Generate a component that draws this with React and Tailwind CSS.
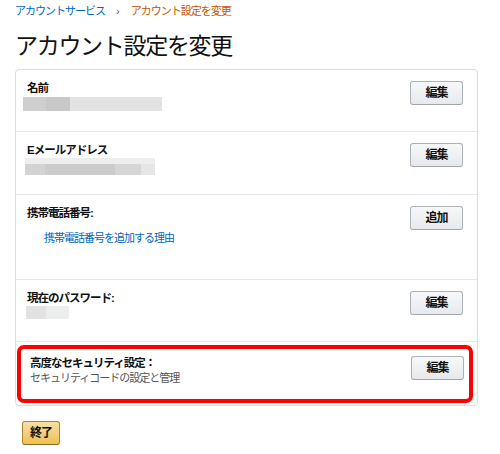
import React from 'react';

const font = { fontFamily: '"Liberation Sans", "Noto Sans CJK JP", sans-serif' };

function GreyButton({ children }) {
  return (
    <button className="w-[53px] h-[24px] shrink-0 rounded-[3px] border border-[#adb1b8] border-b-[#a2a6ac] bg-gradient-to-b from-[#f7f8fa] to-[#e7e9ec] text-[12px] tracking-[-1px] font-bold text-[#111] leading-none">
      {children}
    </button>
  );
}

function Row({ label, children, button, height, last }) {
  return (
    <div className={`flex justify-between px-[11px] pr-[14px] pt-[11px] ${last ? '' : 'border-b border-[#e7e7e7]'} ${height}`}>
      <div>
        <div className="text-[11.5px] tracking-[-1px] font-bold text-[#111] leading-[14px]">{label}</div>
        {children}
      </div>
      <GreyButton>{button}</GreyButton>
    </div>
  );
}

export default function App() {
  return (
    <div className="w-[500px] h-[454px] bg-white px-[15px] pt-[4px]" style={font}>
      <div className="flex items-center text-[11px] tracking-[-1px] leading-[14px]">
        <span className="text-[#0066c0]">アカウントサービス</span>
        <span className="text-[#555] ml-[11px] mr-[12px]">›</span>
        <span className="text-[#c45500]">アカウント設定を変更</span>
      </div>

      <h1 className="mt-[15px] text-[23px] tracking-[-1.3px] leading-[26px] text-[#111] font-normal">アカウント設定を変更</h1>

      <div className="mt-[10px] w-[463px] border border-[#ddd] rounded-[4px]">
        <Row label="名前" button="編集" height="h-[62px]">
          <div className="mt-[2px] -ml-[4px] flex h-[14px] w-[139px]">
            <div className="w-[23px] bg-[#cfcfcf]" />
            <div className="w-[24px] bg-[#c8c8c8]" />
            <div className="flex-1 bg-[#e3e3e3]" />
          </div>
        </Row>
        <Row label="Eメールアドレス" button="編集" height="h-[63px]">
          <div className="mt-[1px] -ml-[2px] w-[130px]">
            <div className="h-[6px] bg-[#eeeeee]" />
            <div className="flex h-[11px]">
              <div className="w-[20px] bg-[#d3d3d3]" />
              <div className="w-[70px] bg-[#cccccc]" />
              <div className="w-[26px] bg-[#d6d6d6]" />
              <div className="flex-1 bg-[#e6e6e6]" />
            </div>
          </div>
        </Row>
        <Row label="携帯電話番号:" button="追加" height="h-[85px]">
          <div className="mt-[11px] ml-[17px] text-[11px] tracking-[-1px] leading-[14px] text-[#0066c0]">携帯電話番号を追加する理由</div>
        </Row>
        <Row label="現在のパスワード:" button="編集" height="h-[62px]">
          <div className="mt-[1px] -ml-[1px] flex h-[13px] w-[43px]">
            <div className="w-[20px] bg-[#e2e2e2]" />
            <div className="flex-1 bg-[#eceeee]" />
          </div>
        </Row>
        <div className="h-[63px] pt-[3px] pl-[1px] pr-[4px] pb-[2px]">
          <div className="h-full flex justify-between border-[4px] border-[#ff0000] rounded-[7px] pl-[9px] pr-[5px] pt-[7px]">
            <div>
              <div className="text-[11.5px] tracking-[-1px] font-bold text-[#111] leading-[14px]">高度なセキュリティ設定：</div>
              <div className="mt-[1px] text-[11px] tracking-[-1px] leading-[14px] text-[#555]">セキュリティコードの設定と管理</div>
            </div>
            <GreyButton>編集</GreyButton>
          </div>
        </div>
      </div>

      <button className="mt-[15px] ml-[7px] w-[38px] h-[24px] rounded-[3px] border border-[#a88734] border-b-[#846a29] bg-gradient-to-b from-[#f7dfa5] to-[#f0c14b] text-[12px] tracking-[-1px] font-bold text-[#111] leading-none">
        終了
      </button>
    </div>
  );
}
